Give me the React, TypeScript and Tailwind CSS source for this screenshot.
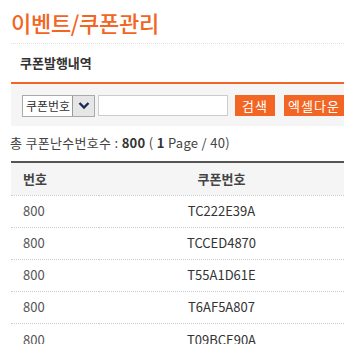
import React from "react"

const codes = ["TC222E39A", "TCCED4870", "T55A1D61E", "T6AF5A807", "T09BCE90A"]

export default function App() {
  return (
    <div
      className="w-[344px] h-[344px] overflow-hidden bg-white text-[#333]"
      style={{ fontFamily: '"Noto Sans CJK KR", "Noto Sans", sans-serif' }}
    >
      <div className="pl-[11px]">
        <h1 className="pt-[7px] h-[43px] text-[22px] leading-[30px] font-medium text-[#f26522] tracking-[-0.3px]">
          이벤트/쿠폰관리
        </h1>
        <div className="border-t border-dotted border-[#e2e2e2]" />
        <h2 className="h-[38px] pl-[9px] pt-[9px] text-[13px] leading-[20px] font-bold text-[#333]">
          쿠폰발행내역
        </h2>
        <div className="border-t-2 border-[#f26522]" />
        <div className="flex items-center h-[42px] bg-[#f5f5f5] pl-[11px] pt-[1px] gap-[3px] whitespace-nowrap">
          <div className="flex h-[22px] border border-[#aaa] bg-white">
            <span className="pl-[3px] pr-[2px] text-[12px] leading-[20px] text-[#333]">쿠폰번호</span>
            <span className="flex items-center justify-center w-[22px] bg-[#e6e6e6] border-l border-[#999]">
              <svg width="12" height="9" viewBox="0 0 12 9">
                <path d="M1.5 2 L6 6.5 L10.5 2" fill="none" stroke="#1a2b5a" strokeWidth="2.4" />
              </svg>
            </span>
          </div>
          <div className="w-[130px] h-[21px] border border-[#ccc] bg-white" />
          <button className="ml-[4px] w-[40px] h-[21px] bg-[#f26522] text-white text-[13px] leading-[21px] tracking-[1px]">
            검색
          </button>
          <button className="ml-[6px] w-[60px] h-[21px] bg-[#f26522] text-white text-[13px] leading-[21px] tracking-[1px]">
            엑셀다운
          </button>
        </div>
        <div className="h-[35px] pt-[8px] text-[13px] leading-[18px] text-[#444] -ml-[1px] tracking-[0.3px]">
          총 쿠폰난수번호수 : <b className="font-bold text-[#333]">800</b> ( <b className="font-bold text-[#333]">1</b> Page / 40)
        </div>
        <div className="border-t-2 border-[#555]" />
        <table className="w-full border-collapse text-[13px]">
          <thead>
            <tr className="h-[32px] bg-[#f5f5f5]">
              <th className="w-[88px] pl-[12px] text-left font-bold text-[#444]">번호</th>
              <th className="text-center font-bold text-[#444]">쿠폰번호</th>
            </tr>
          </thead>
          <tbody>
            {codes.map((c) => (
              <tr key={c} className="h-[32px] border-t border-dotted border-[#ccc]">
                <td className="pl-[12px] text-[#555]">800</td>
                <td className="text-center text-[#333]">{c}</td>
              </tr>
            ))}
          </tbody>
        </table>
      </div>
    </div>
  )
}
